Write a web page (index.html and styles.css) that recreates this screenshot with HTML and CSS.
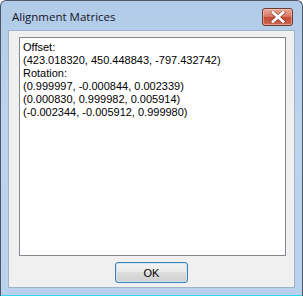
FILE: index.html
```html
<!DOCTYPE html>
<html lang="en">
<head>
    <meta charset="UTF-8">
    <title>Alignment Matrices</title>
    <link rel="stylesheet" href="styles.css">
</head>
<body>
    <div class="window">
        <div class="titlebar">
            <span class="title">Alignment Matrices</span>
            <button class="close" type="button">
                <svg width="16" height="12" viewBox="0 0 16 12">
                    <path d="M3 1.5 L13 10.5 M13 1.5 L3 10.5" stroke="#5a2a20" stroke-width="4.4" stroke-linecap="square" opacity="0.5"/>
                    <path d="M3 1.5 L13 10.5 M13 1.5 L3 10.5" stroke="#ffffff" stroke-width="2.8" stroke-linecap="square"/>
                </svg>
            </button>
        </div>
        <div class="client">
            <div class="textbox">
                <div>Offset:</div>
                <div>(423.018320, 450.448843, -797.432742)</div>
                <div>Rotation:</div>
                <div>(0.999997, -0.000844, 0.002339)</div>
                <div>(0.000830, 0.999982, 0.005914)</div>
                <div>(-0.002344, -0.005912, 0.999980)</div>
            </div>
            <button class="ok" type="button">OK</button>
        </div>
        <div class="bottom-edge"></div>
    </div>
</body>
</html>
```

FILE: styles.css
```css
body {
    margin: 0;
    font-family: "Liberation Sans", Arial, sans-serif;
    background: #ffffff;
}
.window {
    width: 303px;
    height: 296px;
    box-sizing: border-box;
    border: 1px solid #4d5866;
    border-bottom: none;
    border-radius: 6px 6px 0 0;
    background: linear-gradient(180deg, #b1cbe8 0%, #bcd4ee 40%, #b9d1ec 100%);
    display: flex;
    flex-direction: column;
}
.titlebar {
    height: 29px;
    display: flex;
    align-items: flex-start;
    justify-content: space-between;
    padding: 0 9px 0 11px;
}
.title {
    font-family: "Open Sans", sans-serif;
    font-size: 11.5px;
    color: #141428;
    margin-top: 8px;
}
.close {
    width: 31px;
    height: 18px;
    margin-top: 7px;
    padding: 0;
    border: 1px solid #6b3a31;
    border-radius: 3px;
    background: linear-gradient(180deg, #e9a99a 0%, #d97a66 45%, #c44a32 55%, #cf6a52 100%);
    box-shadow: inset 0 0 0 1px rgba(255, 220, 210, 0.45);
    display: flex;
    align-items: center;
    justify-content: center;
}
.client {
    margin: 0 7px;
    height: 258px;
    box-sizing: border-box;
    border: 1px solid #9fb4cb;
    background: #f0f0f0;
    display: flex;
    flex-direction: column;
    align-items: center;
    padding-top: 6px;
}
.textbox {
    width: 267px;
    height: 219px;
    box-sizing: border-box;
    margin-left: 2px;
    border: 1px solid #828790;
    background: #ffffff;
    padding: 3px 3px;
    font-size: 11px;
    line-height: 13px;
    color: #000000;
}
.ok {
    width: 73px;
    height: 21px;
    margin-top: 6px;
    padding: 0;
    border: 1px solid #3c7fb1;
    border-radius: 3px;
    background: linear-gradient(180deg, #f3f3f3 0%, #ebebeb 45%, #dddddd 50%, #cfcfcf 100%);
    box-shadow: inset 0 0 0 1px #c6e8f7;
    font-family: "Liberation Sans", Arial, sans-serif;
    font-size: 11px;
    color: #000000;
}
.bottom-edge {
    flex: 1;
    border-bottom: 1px solid #2fd9ec;
}
```
